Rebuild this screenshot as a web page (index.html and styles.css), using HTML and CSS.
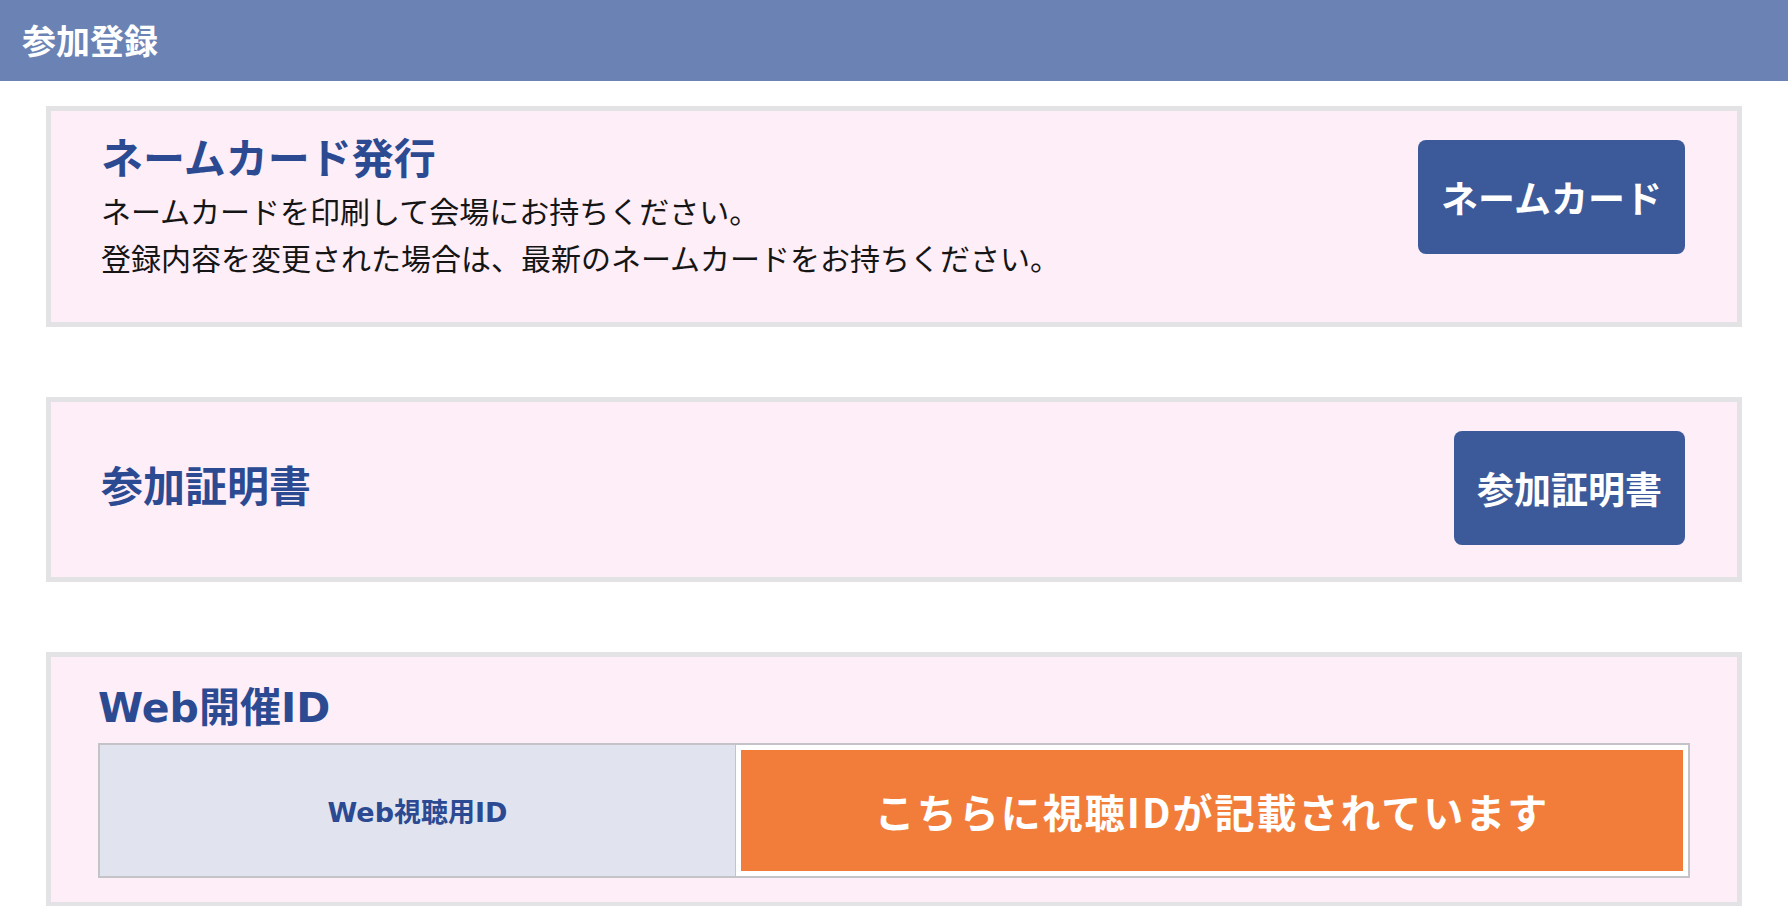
FILE: index.html
```html
<!DOCTYPE html>
<html lang="ja">
<head>
    <meta charset="UTF-8">
    <title>参加登録</title>
    <link rel="stylesheet" href="styles.css">
</head>
<body>
    <div class="pageHead">参加登録</div>

    <div class="content">
        <div class="panel">
            <div class="panelText">
                <div class="panelTitle">ネームカード発行</div>
                <p class="note">ネームカードを印刷して会場にお持ちください。</p>
                <p class="note">登録内容を変更された場合は、最新のネームカードをお持ちください。</p>
            </div>
            <a class="btn" href="#">ネームカード</a>
        </div>

        <div class="panel panelCenter">
            <div class="panelTitle">参加証明書</div>
            <a class="btn" href="#">参加証明書</a>
        </div>

        <div class="panel panelWeb">
            <div class="panelTitle latin">Web開催ID</div>
            <div class="idTable">
                <div class="idLabel latin">Web視聴用ID</div>
                <div class="idValue">
                    <div class="idBox">こちらに視聴IDが記載されています</div>
                </div>
            </div>
        </div>
    </div>
</body>
</html>
```

FILE: styles.css
```css
body {
    margin: 0;
    background: #fff;
    font-family: "Noto Sans CJK JP", "Noto Sans", sans-serif;
    color: #151515;
}
.latin {
    font-family: "DejaVu Sans", "Noto Sans CJK JP", sans-serif;
}
.pageHead {
    height: 81px;
    background: #6b83b4;
    color: #fff;
    font-size: 34px;
    font-weight: bold;
    display: flex;
    align-items: center;
    padding-left: 22px;
    padding-bottom: 2px;
    box-sizing: border-box;
}
.content {
    padding: 25px 46px 0;
    display: flex;
    flex-direction: column;
    gap: 70px;
}
.panel {
    border: 5px solid #e3e2e4;
    background: #fdeef8;
    padding: 20px 52px 41px 50px;
    display: flex;
    justify-content: space-between;
    align-items: flex-start;
}
.panelCenter {
    align-items: center;
    padding-bottom: 32px;
}
.panelTitle {
    color: #2b4a92;
    font-size: 42px;
    font-weight: bold;
    line-height: 50px;
}
.note {
    margin: 0;
    font-size: 30px;
    line-height: 47px;
}
.panelText .panelTitle {
    margin-bottom: 6px;
}
.btn {
    display: flex;
    align-items: center;
    height: 114px;
    margin-top: 9px;
    padding: 0 23px;
    box-sizing: border-box;
    background: #3c5a99;
    border-radius: 8px;
    color: #fff;
    font-size: 37px;
    font-weight: bold;
    text-decoration: none;
}
.panelWeb {
    display: block;
    padding: 26px 47px 24px;
}
.panelWeb .panelTitle {
    font-size: 41px;
}
.idTable {
    margin-top: 10px;
    display: grid;
    grid-template-columns: 636px 1fr;
    border: 2px solid #c4c4c8;
    height: 135px;
    box-sizing: border-box;
}
.idLabel {
    background: #e1e4ef;
    border-right: 1px solid #c4c4c8;
    color: #2b4a92;
    font-size: 27px;
    font-weight: bold;
    display: flex;
    align-items: center;
    justify-content: center;
}
.idValue {
    background: #fff;
    padding: 5px;
    display: flex;
}
.idBox {
    flex: 1;
    background: #f27d3a;
    color: #fff;
    font-size: 40px;
    font-weight: bold;
    letter-spacing: 2px;
    display: flex;
    align-items: center;
    justify-content: center;
}
```
